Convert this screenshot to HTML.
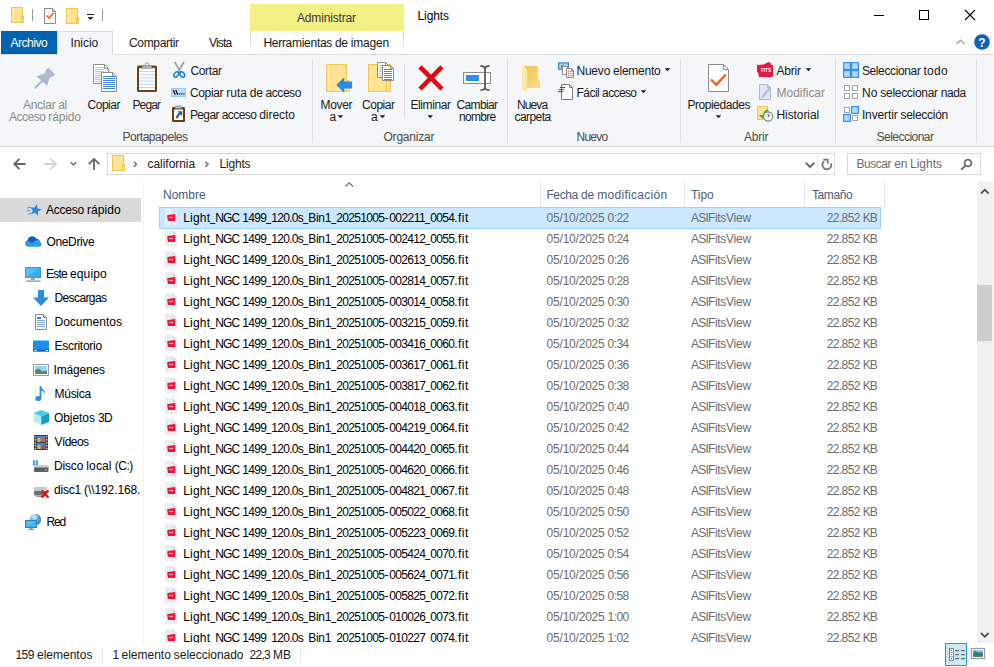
<!DOCTYPE html>
<html lang="es"><head><meta charset="utf-8"><title>Lights</title>
<style>
html,body{margin:0;padding:0;background:#fff;}
body{width:994px;height:667px;position:relative;overflow:hidden;font-family:"Liberation Sans", sans-serif;font-size:12px;}
.b{position:absolute;display:block;}
.t{position:absolute;left:0;white-space:pre;line-height:14px;height:14px;}
.t i{position:absolute;font-style:normal;}
.t .u{transform:scaleX(.76);transform-origin:0 0;top:-.7px;}
</style></head><body>
<div class="b" style="left:250px;top:4px;width:154px;height:27px;background:#f2ef85;"></div>
<div class="b" style="left:250px;top:31px;width:1px;height:20px;background:linear-gradient(#cdcdcd,#e6e6e6 70%,#fff);"></div>
<div class="b" style="left:403px;top:31px;width:1px;height:20px;background:linear-gradient(#cdcdcd,#e6e6e6 70%,#fff);"></div>
<div class="b" style="left:0px;top:54px;width:994px;height:93px;background:#f5f6f7;border-top:1px solid #dadbdc;border-bottom:1px solid #dadbdc;box-sizing:border-box;"></div>
<div class="b" style="left:1px;top:31px;width:56px;height:23px;background:#0063b1;"></div>
<div class="b" style="left:57px;top:31px;width:56px;height:24px;background:#f5f6f7;border:1px solid #dadbdc;border-bottom:none;box-sizing:border-box;"></div>
<div class="b" style="left:312px;top:58px;width:1px;height:85px;background:#e2e3e4;"></div>
<div class="b" style="left:507px;top:58px;width:1px;height:85px;background:#e2e3e4;"></div>
<div class="b" style="left:680px;top:58px;width:1px;height:85px;background:#e2e3e4;"></div>
<div class="b" style="left:835px;top:58px;width:1px;height:85px;background:#e2e3e4;"></div>
<div class="b" style="left:976px;top:58px;width:1px;height:85px;background:#e2e3e4;"></div>
<div class="b" style="left:404px;top:64px;width:1px;height:54px;background:#e2e3e4;"></div>
<div class="b" style="left:107px;top:153px;width:728px;height:22px;background:#fff;border:1px solid #d9d9d9;box-sizing:border-box;"></div>
<div class="b" style="left:817px;top:154px;width:1px;height:20px;background:#e5e5e5;"></div>
<div class="b" style="left:847px;top:153px;width:134px;height:22px;background:#fff;border:1px solid #d9d9d9;box-sizing:border-box;"></div>
<div class="b" style="left:0px;top:198px;width:141px;height:24px;background:#d9d9d9;"></div>
<div class="b" style="left:143px;top:182px;width:1px;height:462px;background:#f3f3f3;"></div>
<div class="b" style="left:540px;top:182px;width:1px;height:25px;background:#e5e5e5;"></div>
<div class="b" style="left:684px;top:182px;width:1px;height:25px;background:#e5e5e5;"></div>
<div class="b" style="left:804px;top:182px;width:1px;height:25px;background:#e5e5e5;"></div>
<div class="b" style="left:884px;top:182px;width:1px;height:25px;background:#e5e5e5;"></div>
<div class="b" style="left:159px;top:207px;width:722px;height:22px;background:#cce8ff;border:1px solid #99d1ff;box-sizing:border-box;"></div>
<div class="b" style="left:977px;top:182px;width:16px;height:461px;background:#f0f0f0;"></div>
<div class="b" style="left:977px;top:285px;width:15px;height:56px;background:#cdcdcd;"></div>
<div class="b" style="left:102px;top:648px;width:1px;height:15px;z-index:6;background:#e5e5e5;"></div>
<div class="b" style="left:300px;top:648px;width:1px;height:15px;z-index:6;background:#e5e5e5;"></div>
<div class="b" style="left:945px;top:643px;width:22px;height:23px;background:#cce8f4;border:1px solid #1e9ade;box-sizing:border-box;"></div>
<svg class="b" style="left:0;top:0" width="994" height="667" viewBox="0 0 994 667"><g transform="translate(165 209)"><path d="M0 0h7.500l4.500 4.500v11.500H0z" fill="#ebecf4"/><path d="M7.500 0l4.500 4.500H7.500z" fill="#d9dbe6"/><path d="M2.900 6.100L9.700 5.100Q10.400 5 10.400 5.700V11.300Q10.400 12.100 9.600 12.100H3.700Q2.900 12.100 2.800 11.400L2.200 6.900Q2.200 6.200 2.900 6.100z" fill="#e6183f"/><rect x="4.200" y="7.900" width="4" height="1.200" fill="#f5a9b8"/></g><g transform="translate(165 230)"><path d="M0 0h7.500l4.500 4.500v11.500H0z" fill="#ebecf4"/><path d="M7.500 0l4.500 4.500H7.500z" fill="#d9dbe6"/><path d="M2.900 6.100L9.700 5.100Q10.400 5 10.400 5.700V11.300Q10.400 12.100 9.600 12.100H3.700Q2.900 12.100 2.800 11.400L2.200 6.900Q2.200 6.200 2.900 6.100z" fill="#e6183f"/><rect x="4.200" y="7.900" width="4" height="1.200" fill="#f5a9b8"/></g><g transform="translate(165 251)"><path d="M0 0h7.500l4.500 4.500v11.500H0z" fill="#ebecf4"/><path d="M7.500 0l4.500 4.500H7.500z" fill="#d9dbe6"/><path d="M2.900 6.100L9.700 5.100Q10.400 5 10.400 5.700V11.300Q10.400 12.100 9.600 12.100H3.700Q2.900 12.100 2.800 11.400L2.200 6.900Q2.200 6.200 2.900 6.100z" fill="#e6183f"/><rect x="4.200" y="7.900" width="4" height="1.200" fill="#f5a9b8"/></g><g transform="translate(165 272)"><path d="M0 0h7.500l4.500 4.500v11.500H0z" fill="#ebecf4"/><path d="M7.500 0l4.500 4.500H7.500z" fill="#d9dbe6"/><path d="M2.900 6.100L9.700 5.100Q10.400 5 10.400 5.700V11.300Q10.400 12.100 9.600 12.100H3.700Q2.900 12.100 2.800 11.400L2.200 6.900Q2.200 6.200 2.900 6.100z" fill="#e6183f"/><rect x="4.200" y="7.900" width="4" height="1.200" fill="#f5a9b8"/></g><g transform="translate(165 293)"><path d="M0 0h7.500l4.500 4.500v11.500H0z" fill="#ebecf4"/><path d="M7.500 0l4.500 4.500H7.500z" fill="#d9dbe6"/><path d="M2.900 6.100L9.700 5.100Q10.400 5 10.400 5.700V11.300Q10.400 12.100 9.600 12.100H3.700Q2.900 12.100 2.800 11.400L2.200 6.900Q2.200 6.200 2.900 6.100z" fill="#e6183f"/><rect x="4.200" y="7.900" width="4" height="1.200" fill="#f5a9b8"/></g><g transform="translate(165 314)"><path d="M0 0h7.500l4.500 4.500v11.500H0z" fill="#ebecf4"/><path d="M7.500 0l4.500 4.500H7.500z" fill="#d9dbe6"/><path d="M2.900 6.100L9.700 5.100Q10.400 5 10.400 5.700V11.300Q10.400 12.100 9.600 12.100H3.700Q2.900 12.100 2.800 11.400L2.200 6.900Q2.200 6.200 2.900 6.100z" fill="#e6183f"/><rect x="4.200" y="7.900" width="4" height="1.200" fill="#f5a9b8"/></g><g transform="translate(165 335)"><path d="M0 0h7.500l4.500 4.500v11.500H0z" fill="#ebecf4"/><path d="M7.500 0l4.500 4.500H7.500z" fill="#d9dbe6"/><path d="M2.900 6.100L9.700 5.100Q10.400 5 10.400 5.700V11.300Q10.400 12.100 9.600 12.100H3.700Q2.900 12.100 2.800 11.400L2.200 6.900Q2.200 6.200 2.900 6.100z" fill="#e6183f"/><rect x="4.200" y="7.900" width="4" height="1.200" fill="#f5a9b8"/></g><g transform="translate(165 356)"><path d="M0 0h7.500l4.500 4.500v11.500H0z" fill="#ebecf4"/><path d="M7.500 0l4.500 4.500H7.500z" fill="#d9dbe6"/><path d="M2.900 6.100L9.700 5.100Q10.400 5 10.400 5.700V11.300Q10.400 12.100 9.600 12.100H3.700Q2.900 12.100 2.800 11.400L2.200 6.900Q2.200 6.200 2.900 6.100z" fill="#e6183f"/><rect x="4.200" y="7.900" width="4" height="1.200" fill="#f5a9b8"/></g><g transform="translate(165 377)"><path d="M0 0h7.500l4.500 4.500v11.500H0z" fill="#ebecf4"/><path d="M7.500 0l4.500 4.500H7.500z" fill="#d9dbe6"/><path d="M2.900 6.100L9.700 5.100Q10.400 5 10.400 5.700V11.300Q10.400 12.100 9.600 12.100H3.700Q2.900 12.100 2.800 11.400L2.200 6.900Q2.200 6.200 2.900 6.100z" fill="#e6183f"/><rect x="4.200" y="7.900" width="4" height="1.200" fill="#f5a9b8"/></g><g transform="translate(165 398)"><path d="M0 0h7.500l4.500 4.500v11.500H0z" fill="#ebecf4"/><path d="M7.500 0l4.500 4.500H7.500z" fill="#d9dbe6"/><path d="M2.900 6.100L9.700 5.100Q10.400 5 10.400 5.700V11.300Q10.400 12.100 9.600 12.100H3.700Q2.900 12.100 2.800 11.400L2.200 6.900Q2.200 6.200 2.900 6.100z" fill="#e6183f"/><rect x="4.200" y="7.900" width="4" height="1.200" fill="#f5a9b8"/></g><g transform="translate(165 419)"><path d="M0 0h7.500l4.500 4.500v11.500H0z" fill="#ebecf4"/><path d="M7.500 0l4.500 4.500H7.500z" fill="#d9dbe6"/><path d="M2.900 6.100L9.700 5.100Q10.400 5 10.400 5.700V11.300Q10.400 12.100 9.600 12.100H3.700Q2.900 12.100 2.800 11.400L2.200 6.900Q2.200 6.200 2.900 6.100z" fill="#e6183f"/><rect x="4.200" y="7.900" width="4" height="1.200" fill="#f5a9b8"/></g><g transform="translate(165 440)"><path d="M0 0h7.500l4.500 4.500v11.500H0z" fill="#ebecf4"/><path d="M7.500 0l4.500 4.500H7.500z" fill="#d9dbe6"/><path d="M2.900 6.100L9.700 5.100Q10.400 5 10.400 5.700V11.300Q10.400 12.100 9.600 12.100H3.700Q2.900 12.100 2.800 11.400L2.200 6.900Q2.200 6.200 2.900 6.100z" fill="#e6183f"/><rect x="4.200" y="7.900" width="4" height="1.200" fill="#f5a9b8"/></g><g transform="translate(165 461)"><path d="M0 0h7.500l4.500 4.500v11.500H0z" fill="#ebecf4"/><path d="M7.500 0l4.500 4.500H7.500z" fill="#d9dbe6"/><path d="M2.900 6.100L9.700 5.100Q10.400 5 10.400 5.700V11.300Q10.400 12.100 9.600 12.100H3.700Q2.900 12.100 2.800 11.400L2.200 6.900Q2.200 6.200 2.900 6.100z" fill="#e6183f"/><rect x="4.200" y="7.900" width="4" height="1.200" fill="#f5a9b8"/></g><g transform="translate(165 482)"><path d="M0 0h7.500l4.500 4.500v11.500H0z" fill="#ebecf4"/><path d="M7.500 0l4.500 4.500H7.500z" fill="#d9dbe6"/><path d="M2.900 6.100L9.700 5.100Q10.400 5 10.400 5.700V11.300Q10.400 12.100 9.600 12.100H3.700Q2.900 12.100 2.800 11.400L2.200 6.900Q2.200 6.200 2.900 6.100z" fill="#e6183f"/><rect x="4.200" y="7.900" width="4" height="1.200" fill="#f5a9b8"/></g><g transform="translate(165 503)"><path d="M0 0h7.500l4.500 4.500v11.500H0z" fill="#ebecf4"/><path d="M7.500 0l4.500 4.500H7.500z" fill="#d9dbe6"/><path d="M2.900 6.100L9.700 5.100Q10.400 5 10.400 5.700V11.300Q10.400 12.100 9.600 12.100H3.700Q2.900 12.100 2.800 11.400L2.200 6.900Q2.200 6.200 2.900 6.100z" fill="#e6183f"/><rect x="4.200" y="7.900" width="4" height="1.200" fill="#f5a9b8"/></g><g transform="translate(165 524)"><path d="M0 0h7.500l4.500 4.500v11.500H0z" fill="#ebecf4"/><path d="M7.500 0l4.500 4.500H7.500z" fill="#d9dbe6"/><path d="M2.900 6.100L9.700 5.100Q10.400 5 10.400 5.700V11.300Q10.400 12.100 9.600 12.100H3.700Q2.900 12.100 2.800 11.400L2.200 6.900Q2.200 6.200 2.900 6.100z" fill="#e6183f"/><rect x="4.200" y="7.900" width="4" height="1.200" fill="#f5a9b8"/></g><g transform="translate(165 545)"><path d="M0 0h7.500l4.500 4.500v11.500H0z" fill="#ebecf4"/><path d="M7.500 0l4.500 4.500H7.500z" fill="#d9dbe6"/><path d="M2.900 6.100L9.700 5.100Q10.400 5 10.400 5.700V11.300Q10.400 12.100 9.600 12.100H3.700Q2.900 12.100 2.800 11.400L2.200 6.900Q2.200 6.200 2.900 6.100z" fill="#e6183f"/><rect x="4.200" y="7.900" width="4" height="1.200" fill="#f5a9b8"/></g><g transform="translate(165 566)"><path d="M0 0h7.500l4.500 4.500v11.500H0z" fill="#ebecf4"/><path d="M7.500 0l4.500 4.500H7.500z" fill="#d9dbe6"/><path d="M2.900 6.100L9.700 5.100Q10.400 5 10.400 5.700V11.300Q10.400 12.100 9.600 12.100H3.700Q2.900 12.100 2.800 11.400L2.200 6.900Q2.200 6.200 2.900 6.100z" fill="#e6183f"/><rect x="4.200" y="7.900" width="4" height="1.200" fill="#f5a9b8"/></g><g transform="translate(165 587)"><path d="M0 0h7.500l4.500 4.500v11.500H0z" fill="#ebecf4"/><path d="M7.500 0l4.500 4.500H7.500z" fill="#d9dbe6"/><path d="M2.900 6.100L9.700 5.100Q10.400 5 10.400 5.700V11.300Q10.400 12.100 9.600 12.100H3.700Q2.900 12.100 2.800 11.400L2.200 6.900Q2.200 6.200 2.900 6.100z" fill="#e6183f"/><rect x="4.200" y="7.900" width="4" height="1.200" fill="#f5a9b8"/></g><g transform="translate(165 608)"><path d="M0 0h7.500l4.500 4.500v11.500H0z" fill="#ebecf4"/><path d="M7.500 0l4.500 4.500H7.500z" fill="#d9dbe6"/><path d="M2.900 6.100L9.700 5.100Q10.400 5 10.400 5.700V11.300Q10.400 12.100 9.600 12.100H3.700Q2.900 12.100 2.800 11.400L2.200 6.900Q2.200 6.200 2.900 6.100z" fill="#e6183f"/><rect x="4.200" y="7.900" width="4" height="1.200" fill="#f5a9b8"/></g><g transform="translate(165 629)"><path d="M0 0h7.500l4.500 4.500v11.500H0z" fill="#ebecf4"/><path d="M7.500 0l4.500 4.500H7.500z" fill="#d9dbe6"/><path d="M2.900 6.100L9.700 5.100Q10.400 5 10.400 5.700V11.300Q10.400 12.100 9.600 12.100H3.700Q2.900 12.100 2.800 11.400L2.200 6.900Q2.200 6.200 2.900 6.100z" fill="#e6183f"/><rect x="4.200" y="7.900" width="4" height="1.200" fill="#f5a9b8"/></g></svg>
<span class="t" style="top:11px;color:#3a3a3a;"><i style="left:297px;letter-spacing:-0.17px;">Administrar</i></span>
<span class="t" style="top:9px;"><i style="left:417.5px;letter-spacing:-0.1px;">Lights</i></span>
<span class="t" style="top:36px;color:#fff;"><i style="left:10.5px;letter-spacing:-0.47px;">Archivo</i></span>
<span class="t" style="top:36px;color:#1a1a1a;"><i style="left:70.5px;letter-spacing:-0.07px;">Inicio</i></span>
<span class="t" style="top:36px;color:#1a1a1a;"><i style="left:129px;letter-spacing:-0.33px;">Compartir</i></span>
<span class="t" style="top:36px;color:#1a1a1a;"><i style="left:209px;letter-spacing:-0.82px;">Vista</i></span>
<span class="t" style="top:36px;color:#1a1a1a;"><i style="left:263.4px;letter-spacing:-0.28px;">Herramientas </i><i style="left:334.97px;letter-spacing:-0.3px;">de </i><i style="left:350.66px;letter-spacing:-0.19px;">imagen</i></span>
<span class="t" style="top:97.5px;color:#8b8b8b;"><i style="left:22.9px;letter-spacing:-0.25px;">Anclar </i><i style="left:58.29px;letter-spacing:-0.37px;">al</i></span>
<span class="t" style="top:109.5px;color:#8b8b8b;"><i style="left:8.9px;letter-spacing:-0.48px;">Acceso </i><i style="left:48.26px;letter-spacing:-0.12px;">rápido</i></span>
<span class="t" style="top:97.5px;color:#1a1a1a;"><i style="left:87.5px;letter-spacing:-0.47px;">Copiar</i></span>
<span class="t" style="top:97.5px;color:#1a1a1a;"><i style="left:132.5px;letter-spacing:-0.88px;">Pegar</i></span>
<span class="t" style="top:63.5px;color:#1a1a1a;"><i style="left:190.5px;letter-spacing:-0.37px;">Cortar</i></span>
<span class="t" style="top:85.5px;color:#1a1a1a;"><i style="left:189.9px;letter-spacing:-0.33px;">Copiar </i><i style="left:226.25px;letter-spacing:-0.01px;">ruta </i><i style="left:249.82px;letter-spacing:-0.29px;">de </i><i style="left:265.54px;letter-spacing:-0.44px;">acceso</i></span>
<span class="t" style="top:107.5px;color:#1a1a1a;"><i style="left:189.9px;letter-spacing:-0.62px;">Pegar </i><i style="left:221.69px;letter-spacing:-0.56px;">acceso </i><i style="left:259.26px;letter-spacing:-0.05px;">directo</i></span>
<span class="t" style="top:130px;color:#4a4a4a;"><i style="left:122.5px;letter-spacing:-0.47px;">Portapapeles</i></span>
<span class="t" style="top:97.5px;color:#1a1a1a;"><i style="left:320.5px;letter-spacing:-0.34px;">Mover</i></span>
<span class="t" style="top:109.5px;color:#1a1a1a;"><i style="left:329.5px;">a</i></span>
<span class="t" style="top:97.5px;color:#1a1a1a;"><i style="left:362px;letter-spacing:-0.47px;">Copiar</i></span>
<span class="t" style="top:109.5px;color:#1a1a1a;"><i style="left:371px;">a</i></span>
<span class="t" style="top:97.5px;color:#1a1a1a;"><i style="left:410.5px;letter-spacing:-0.41px;">Eliminar</i></span>
<span class="t" style="top:97.5px;color:#1a1a1a;"><i style="left:456.5px;letter-spacing:-0.64px;">Cambiar</i></span>
<span class="t" style="top:109.5px;color:#1a1a1a;"><i style="left:459px;letter-spacing:-0.7px;">nombre</i></span>
<span class="t" style="top:130px;color:#4a4a4a;"><i style="left:383.5px;letter-spacing:-0.21px;">Organizar</i></span>
<span class="t" style="top:97.5px;color:#1a1a1a;"><i style="left:517px;letter-spacing:-0.88px;">Nueva</i></span>
<span class="t" style="top:109.5px;color:#1a1a1a;"><i style="left:514.5px;letter-spacing:-0.56px;">carpeta</i></span>
<span class="t" style="top:63.5px;color:#1a1a1a;"><i style="left:576.4px;letter-spacing:-0.18px;">Nuevo </i><i style="left:613.09px;letter-spacing:-0.26px;">elemento</i></span>
<span class="t" style="top:85.5px;color:#1a1a1a;"><i style="left:576.4px;letter-spacing:-0.5px;">Fácil </i><i style="left:602.11px;letter-spacing:-0.62px;">acceso</i></span>
<span class="t" style="top:130px;color:#4a4a4a;"><i style="left:576.5px;letter-spacing:-0.75px;">Nuevo</i></span>
<span class="t" style="top:97.5px;color:#1a1a1a;"><i style="left:687.5px;letter-spacing:-0.44px;">Propiedades</i></span>
<span class="t" style="top:63.5px;color:#1a1a1a;"><i style="left:776.5px;letter-spacing:-0.21px;">Abrir</i></span>
<span class="t" style="top:85.5px;color:#8b8b8b;"><i style="left:776.5px;letter-spacing:-0.02px;">Modificar</i></span>
<span class="t" style="top:107.5px;color:#1a1a1a;"><i style="left:776.5px;letter-spacing:-0.08px;">Historial</i></span>
<span class="t" style="top:130px;color:#4a4a4a;"><i style="left:744px;letter-spacing:-0.21px;">Abrir</i></span>
<span class="t" style="top:63.5px;color:#1a1a1a;"><i style="left:861.9px;letter-spacing:-0.37px;">Seleccionar </i><i style="left:923.47px;letter-spacing:0.27px;">todo</i></span>
<span class="t" style="top:85.5px;color:#1a1a1a;"><i style="left:861.9px;letter-spacing:0.11px;">No </i><i style="left:880.37px;letter-spacing:-0.3px;">seleccionar </i><i style="left:940.63px;letter-spacing:-0.36px;">nada</i></span>
<span class="t" style="top:107.5px;color:#1a1a1a;"><i style="left:861.9px;letter-spacing:-0.12px;">Invertir </i><i style="left:900.55px;letter-spacing:-0.3px;">selección</i></span>
<span class="t" style="top:130px;color:#4a4a4a;"><i style="left:876.5px;letter-spacing:-0.52px;">Seleccionar</i></span>
<span class="t" style="top:157px;color:#1a1a1a;"><i style="left:147.5px;letter-spacing:-0.04px;">california</i></span>
<span class="t" style="top:157px;color:#1a1a1a;"><i style="left:219.5px;letter-spacing:-0.2px;">Lights</i></span>
<span class="t" style="top:157px;color:#6d6d6d;"><i style="left:856.4px;letter-spacing:-0.43px;">Buscar </i><i style="left:894.18px;letter-spacing:-0.21px;">en </i><i style="left:910.09px;letter-spacing:-0.03px;">Lights</i></span>
<span class="t" style="top:188px;color:#4c607a;"><i style="left:163px;">Nombre</i></span>
<span class="t" style="top:188px;color:#4c607a;"><i style="left:546.4px;letter-spacing:-0.37px;">Fecha </i><i style="left:580.97px;letter-spacing:-0.06px;">de </i><i style="left:597.24px;letter-spacing:0.29px;">modificación</i></span>
<span class="t" style="top:188px;color:#4c607a;"><i style="left:691px;letter-spacing:-0.07px;">Tipo</i></span>
<span class="t" style="top:188px;color:#4c607a;"><i style="left:812px;letter-spacing:-0.4px;">Tamaño</i></span>
<span class="t" style="top:203px;"><i style="left:45.9px;letter-spacing:-0.23px;">Acceso </i><i style="left:86.9px;letter-spacing:0.11px;">rápido</i></span>
<span class="t" style="top:235px;"><i style="left:46.5px;letter-spacing:-0.36px;">OneDrive</i></span>
<span class="t" style="top:267px;"><i style="left:45.9px;letter-spacing:-0.75px;">Este </i><i style="left:69.9px;letter-spacing:0.16px;">equipo</i></span>
<span class="t" style="top:291px;"><i style="left:54.5px;letter-spacing:-0.61px;">Descargas</i></span>
<span class="t" style="top:315px;"><i style="left:54.5px;letter-spacing:0.01px;">Documentos</i></span>
<span class="t" style="top:339px;"><i style="left:54.5px;letter-spacing:-0.26px;">Escritorio</i></span>
<span class="t" style="top:363px;"><i style="left:53.5px;letter-spacing:-0.17px;">Imágenes</i></span>
<span class="t" style="top:387px;"><i style="left:54.5px;letter-spacing:-0.27px;">Música</i></span>
<span class="t" style="top:411px;"><i style="left:53.9px;letter-spacing:-0.05px;">Objetos </i><i style="left:97.9px;letter-spacing:-0.67px;">3D</i></span>
<span class="t" style="top:435px;"><i style="left:54.5px;letter-spacing:-0.57px;">Vídeos</i></span>
<span class="t" style="top:459px;"><i style="left:53.9px;letter-spacing:-0.13px;">Disco </i><i style="left:86.31px;letter-spacing:0.13px;">local </i><i style="left:114.67px;letter-spacing:-0.44px;">(C:)</i></span>
<span class="t" style="top:483px;"><i style="left:53.9px;letter-spacing:-0.17px;">disc1 </i><i style="left:84.07px;letter-spacing:-0.1px;">(\\192.168.</i></span>
<span class="t" style="top:515px;"><i style="left:46.5px;letter-spacing:-1.17px;">Red</i></span>
<span class="t" style="top:210.5px;"><i style="left:183.2px;letter-spacing:0.2px;">Light</i><i class="u" style="left:210.2px">_</i><i style="left:215.2px;letter-spacing:-0.89px;">NGC </i><i style="left:242.2px;letter-spacing:-0.67px;">1499</i><i class="u" style="left:266.2px">_</i><i style="left:271.2px;letter-spacing:-0.67px;">120.0s</i><i class="u" style="left:303.2px">_</i><i style="left:308.2px;letter-spacing:-0.25px;">Bin1</i><i class="u" style="left:331.2px">_</i><i style="left:336.2px;letter-spacing:-0.67px;">20251005</i><i style="left:384.6px;">-</i><i style="left:389.2px;letter-spacing:-0.53px;">002211</i><i class="u" style="left:425.2px">_</i><i style="left:430.2px;letter-spacing:-0.67px;">0054</i><i style="left:454.2px;letter-spacing:0.48px;">.fit</i></span>
<span class="t" style="top:210.5px;color:#6d6d6d;"><i style="left:546.6px;letter-spacing:-0.21px;">05/10/2025 </i><i style="left:607.6px;letter-spacing:-0.59px;">0:22</i></span>
<span class="t" style="top:210.5px;color:#6d6d6d;"><i style="left:691px;letter-spacing:-0.78px;">ASI</i><i style="left:708px;letter-spacing:-0.33px;">Fits</i><i style="left:726px;letter-spacing:-0.2px;">View</i></span>
<span class="t" style="top:210.5px;color:#6d6d6d;"><i style="left:826.8px;letter-spacing:-0.62px;">22.852 </i><i style="left:862.8px;letter-spacing:-1px;">KB</i></span>
<span class="t" style="top:231.5px;"><i style="left:183.2px;letter-spacing:0.2px;">Light</i><i class="u" style="left:210.2px">_</i><i style="left:215.2px;letter-spacing:-0.89px;">NGC </i><i style="left:242.2px;letter-spacing:-0.67px;">1499</i><i class="u" style="left:266.2px">_</i><i style="left:271.2px;letter-spacing:-0.67px;">120.0s</i><i class="u" style="left:303.2px">_</i><i style="left:308.2px;letter-spacing:-0.25px;">Bin1</i><i class="u" style="left:331.2px">_</i><i style="left:336.2px;letter-spacing:-0.67px;">20251005</i><i style="left:384.6px;">-</i><i style="left:389.2px;letter-spacing:-0.67px;">002412</i><i class="u" style="left:425.2px">_</i><i style="left:430.2px;letter-spacing:-0.67px;">0055</i><i style="left:454.2px;letter-spacing:0.48px;">.fit</i></span>
<span class="t" style="top:231.5px;color:#6d6d6d;"><i style="left:546.6px;letter-spacing:-0.21px;">05/10/2025 </i><i style="left:607.6px;letter-spacing:-0.59px;">0:24</i></span>
<span class="t" style="top:231.5px;color:#6d6d6d;"><i style="left:691px;letter-spacing:-0.78px;">ASI</i><i style="left:708px;letter-spacing:-0.33px;">Fits</i><i style="left:726px;letter-spacing:-0.2px;">View</i></span>
<span class="t" style="top:231.5px;color:#6d6d6d;"><i style="left:826.8px;letter-spacing:-0.62px;">22.852 </i><i style="left:862.8px;letter-spacing:-1px;">KB</i></span>
<span class="t" style="top:252.5px;"><i style="left:183.2px;letter-spacing:0.2px;">Light</i><i class="u" style="left:210.2px">_</i><i style="left:215.2px;letter-spacing:-0.89px;">NGC </i><i style="left:242.2px;letter-spacing:-0.67px;">1499</i><i class="u" style="left:266.2px">_</i><i style="left:271.2px;letter-spacing:-0.67px;">120.0s</i><i class="u" style="left:303.2px">_</i><i style="left:308.2px;letter-spacing:-0.25px;">Bin1</i><i class="u" style="left:331.2px">_</i><i style="left:336.2px;letter-spacing:-0.67px;">20251005</i><i style="left:384.6px;">-</i><i style="left:389.2px;letter-spacing:-0.67px;">002613</i><i class="u" style="left:425.2px">_</i><i style="left:430.2px;letter-spacing:-0.67px;">0056</i><i style="left:454.2px;letter-spacing:0.48px;">.fit</i></span>
<span class="t" style="top:252.5px;color:#6d6d6d;"><i style="left:546.6px;letter-spacing:-0.21px;">05/10/2025 </i><i style="left:607.6px;letter-spacing:-0.59px;">0:26</i></span>
<span class="t" style="top:252.5px;color:#6d6d6d;"><i style="left:691px;letter-spacing:-0.78px;">ASI</i><i style="left:708px;letter-spacing:-0.33px;">Fits</i><i style="left:726px;letter-spacing:-0.2px;">View</i></span>
<span class="t" style="top:252.5px;color:#6d6d6d;"><i style="left:826.8px;letter-spacing:-0.62px;">22.852 </i><i style="left:862.8px;letter-spacing:-1px;">KB</i></span>
<span class="t" style="top:273.5px;"><i style="left:183.2px;letter-spacing:0.2px;">Light</i><i class="u" style="left:210.2px">_</i><i style="left:215.2px;letter-spacing:-0.89px;">NGC </i><i style="left:242.2px;letter-spacing:-0.67px;">1499</i><i class="u" style="left:266.2px">_</i><i style="left:271.2px;letter-spacing:-0.67px;">120.0s</i><i class="u" style="left:303.2px">_</i><i style="left:308.2px;letter-spacing:-0.25px;">Bin1</i><i class="u" style="left:331.2px">_</i><i style="left:336.2px;letter-spacing:-0.67px;">20251005</i><i style="left:384.6px;">-</i><i style="left:389.2px;letter-spacing:-0.67px;">002814</i><i class="u" style="left:425.2px">_</i><i style="left:430.2px;letter-spacing:-0.67px;">0057</i><i style="left:454.2px;letter-spacing:0.48px;">.fit</i></span>
<span class="t" style="top:273.5px;color:#6d6d6d;"><i style="left:546.6px;letter-spacing:-0.21px;">05/10/2025 </i><i style="left:607.6px;letter-spacing:-0.59px;">0:28</i></span>
<span class="t" style="top:273.5px;color:#6d6d6d;"><i style="left:691px;letter-spacing:-0.78px;">ASI</i><i style="left:708px;letter-spacing:-0.33px;">Fits</i><i style="left:726px;letter-spacing:-0.2px;">View</i></span>
<span class="t" style="top:273.5px;color:#6d6d6d;"><i style="left:826.8px;letter-spacing:-0.62px;">22.852 </i><i style="left:862.8px;letter-spacing:-1px;">KB</i></span>
<span class="t" style="top:294.5px;"><i style="left:183.2px;letter-spacing:0.2px;">Light</i><i class="u" style="left:210.2px">_</i><i style="left:215.2px;letter-spacing:-0.89px;">NGC </i><i style="left:242.2px;letter-spacing:-0.67px;">1499</i><i class="u" style="left:266.2px">_</i><i style="left:271.2px;letter-spacing:-0.67px;">120.0s</i><i class="u" style="left:303.2px">_</i><i style="left:308.2px;letter-spacing:-0.25px;">Bin1</i><i class="u" style="left:331.2px">_</i><i style="left:336.2px;letter-spacing:-0.67px;">20251005</i><i style="left:384.6px;">-</i><i style="left:389.2px;letter-spacing:-0.67px;">003014</i><i class="u" style="left:425.2px">_</i><i style="left:430.2px;letter-spacing:-0.67px;">0058</i><i style="left:454.2px;letter-spacing:0.48px;">.fit</i></span>
<span class="t" style="top:294.5px;color:#6d6d6d;"><i style="left:546.6px;letter-spacing:-0.21px;">05/10/2025 </i><i style="left:607.6px;letter-spacing:-0.59px;">0:30</i></span>
<span class="t" style="top:294.5px;color:#6d6d6d;"><i style="left:691px;letter-spacing:-0.78px;">ASI</i><i style="left:708px;letter-spacing:-0.33px;">Fits</i><i style="left:726px;letter-spacing:-0.2px;">View</i></span>
<span class="t" style="top:294.5px;color:#6d6d6d;"><i style="left:826.8px;letter-spacing:-0.62px;">22.852 </i><i style="left:862.8px;letter-spacing:-1px;">KB</i></span>
<span class="t" style="top:315.5px;"><i style="left:183.2px;letter-spacing:0.2px;">Light</i><i class="u" style="left:210.2px">_</i><i style="left:215.2px;letter-spacing:-0.89px;">NGC </i><i style="left:242.2px;letter-spacing:-0.67px;">1499</i><i class="u" style="left:266.2px">_</i><i style="left:271.2px;letter-spacing:-0.67px;">120.0s</i><i class="u" style="left:303.2px">_</i><i style="left:308.2px;letter-spacing:-0.25px;">Bin1</i><i class="u" style="left:331.2px">_</i><i style="left:336.2px;letter-spacing:-0.67px;">20251005</i><i style="left:384.6px;">-</i><i style="left:389.2px;letter-spacing:-0.67px;">003215</i><i class="u" style="left:425.2px">_</i><i style="left:430.2px;letter-spacing:-0.67px;">0059</i><i style="left:454.2px;letter-spacing:0.48px;">.fit</i></span>
<span class="t" style="top:315.5px;color:#6d6d6d;"><i style="left:546.6px;letter-spacing:-0.21px;">05/10/2025 </i><i style="left:607.6px;letter-spacing:-0.59px;">0:32</i></span>
<span class="t" style="top:315.5px;color:#6d6d6d;"><i style="left:691px;letter-spacing:-0.78px;">ASI</i><i style="left:708px;letter-spacing:-0.33px;">Fits</i><i style="left:726px;letter-spacing:-0.2px;">View</i></span>
<span class="t" style="top:315.5px;color:#6d6d6d;"><i style="left:826.8px;letter-spacing:-0.62px;">22.852 </i><i style="left:862.8px;letter-spacing:-1px;">KB</i></span>
<span class="t" style="top:336.5px;"><i style="left:183.2px;letter-spacing:0.2px;">Light</i><i class="u" style="left:210.2px">_</i><i style="left:215.2px;letter-spacing:-0.89px;">NGC </i><i style="left:242.2px;letter-spacing:-0.67px;">1499</i><i class="u" style="left:266.2px">_</i><i style="left:271.2px;letter-spacing:-0.67px;">120.0s</i><i class="u" style="left:303.2px">_</i><i style="left:308.2px;letter-spacing:-0.25px;">Bin1</i><i class="u" style="left:331.2px">_</i><i style="left:336.2px;letter-spacing:-0.67px;">20251005</i><i style="left:384.6px;">-</i><i style="left:389.2px;letter-spacing:-0.67px;">003416</i><i class="u" style="left:425.2px">_</i><i style="left:430.2px;letter-spacing:-0.67px;">0060</i><i style="left:454.2px;letter-spacing:0.48px;">.fit</i></span>
<span class="t" style="top:336.5px;color:#6d6d6d;"><i style="left:546.6px;letter-spacing:-0.21px;">05/10/2025 </i><i style="left:607.6px;letter-spacing:-0.59px;">0:34</i></span>
<span class="t" style="top:336.5px;color:#6d6d6d;"><i style="left:691px;letter-spacing:-0.78px;">ASI</i><i style="left:708px;letter-spacing:-0.33px;">Fits</i><i style="left:726px;letter-spacing:-0.2px;">View</i></span>
<span class="t" style="top:336.5px;color:#6d6d6d;"><i style="left:826.8px;letter-spacing:-0.62px;">22.852 </i><i style="left:862.8px;letter-spacing:-1px;">KB</i></span>
<span class="t" style="top:357.5px;"><i style="left:183.2px;letter-spacing:0.2px;">Light</i><i class="u" style="left:210.2px">_</i><i style="left:215.2px;letter-spacing:-0.89px;">NGC </i><i style="left:242.2px;letter-spacing:-0.67px;">1499</i><i class="u" style="left:266.2px">_</i><i style="left:271.2px;letter-spacing:-0.67px;">120.0s</i><i class="u" style="left:303.2px">_</i><i style="left:308.2px;letter-spacing:-0.25px;">Bin1</i><i class="u" style="left:331.2px">_</i><i style="left:336.2px;letter-spacing:-0.67px;">20251005</i><i style="left:384.6px;">-</i><i style="left:389.2px;letter-spacing:-0.67px;">003617</i><i class="u" style="left:425.2px">_</i><i style="left:430.2px;letter-spacing:-0.67px;">0061</i><i style="left:454.2px;letter-spacing:0.48px;">.fit</i></span>
<span class="t" style="top:357.5px;color:#6d6d6d;"><i style="left:546.6px;letter-spacing:-0.21px;">05/10/2025 </i><i style="left:607.6px;letter-spacing:-0.59px;">0:36</i></span>
<span class="t" style="top:357.5px;color:#6d6d6d;"><i style="left:691px;letter-spacing:-0.78px;">ASI</i><i style="left:708px;letter-spacing:-0.33px;">Fits</i><i style="left:726px;letter-spacing:-0.2px;">View</i></span>
<span class="t" style="top:357.5px;color:#6d6d6d;"><i style="left:826.8px;letter-spacing:-0.62px;">22.852 </i><i style="left:862.8px;letter-spacing:-1px;">KB</i></span>
<span class="t" style="top:378.5px;"><i style="left:183.2px;letter-spacing:0.2px;">Light</i><i class="u" style="left:210.2px">_</i><i style="left:215.2px;letter-spacing:-0.89px;">NGC </i><i style="left:242.2px;letter-spacing:-0.67px;">1499</i><i class="u" style="left:266.2px">_</i><i style="left:271.2px;letter-spacing:-0.67px;">120.0s</i><i class="u" style="left:303.2px">_</i><i style="left:308.2px;letter-spacing:-0.25px;">Bin1</i><i class="u" style="left:331.2px">_</i><i style="left:336.2px;letter-spacing:-0.67px;">20251005</i><i style="left:384.6px;">-</i><i style="left:389.2px;letter-spacing:-0.67px;">003817</i><i class="u" style="left:425.2px">_</i><i style="left:430.2px;letter-spacing:-0.67px;">0062</i><i style="left:454.2px;letter-spacing:0.48px;">.fit</i></span>
<span class="t" style="top:378.5px;color:#6d6d6d;"><i style="left:546.6px;letter-spacing:-0.21px;">05/10/2025 </i><i style="left:607.6px;letter-spacing:-0.59px;">0:38</i></span>
<span class="t" style="top:378.5px;color:#6d6d6d;"><i style="left:691px;letter-spacing:-0.78px;">ASI</i><i style="left:708px;letter-spacing:-0.33px;">Fits</i><i style="left:726px;letter-spacing:-0.2px;">View</i></span>
<span class="t" style="top:378.5px;color:#6d6d6d;"><i style="left:826.8px;letter-spacing:-0.62px;">22.852 </i><i style="left:862.8px;letter-spacing:-1px;">KB</i></span>
<span class="t" style="top:399.5px;"><i style="left:183.2px;letter-spacing:0.2px;">Light</i><i class="u" style="left:210.2px">_</i><i style="left:215.2px;letter-spacing:-0.89px;">NGC </i><i style="left:242.2px;letter-spacing:-0.67px;">1499</i><i class="u" style="left:266.2px">_</i><i style="left:271.2px;letter-spacing:-0.67px;">120.0s</i><i class="u" style="left:303.2px">_</i><i style="left:308.2px;letter-spacing:-0.25px;">Bin1</i><i class="u" style="left:331.2px">_</i><i style="left:336.2px;letter-spacing:-0.67px;">20251005</i><i style="left:384.6px;">-</i><i style="left:389.2px;letter-spacing:-0.67px;">004018</i><i class="u" style="left:425.2px">_</i><i style="left:430.2px;letter-spacing:-0.67px;">0063</i><i style="left:454.2px;letter-spacing:0.48px;">.fit</i></span>
<span class="t" style="top:399.5px;color:#6d6d6d;"><i style="left:546.6px;letter-spacing:-0.21px;">05/10/2025 </i><i style="left:607.6px;letter-spacing:-0.59px;">0:40</i></span>
<span class="t" style="top:399.5px;color:#6d6d6d;"><i style="left:691px;letter-spacing:-0.78px;">ASI</i><i style="left:708px;letter-spacing:-0.33px;">Fits</i><i style="left:726px;letter-spacing:-0.2px;">View</i></span>
<span class="t" style="top:399.5px;color:#6d6d6d;"><i style="left:826.8px;letter-spacing:-0.62px;">22.852 </i><i style="left:862.8px;letter-spacing:-1px;">KB</i></span>
<span class="t" style="top:420.5px;"><i style="left:183.2px;letter-spacing:0.2px;">Light</i><i class="u" style="left:210.2px">_</i><i style="left:215.2px;letter-spacing:-0.89px;">NGC </i><i style="left:242.2px;letter-spacing:-0.67px;">1499</i><i class="u" style="left:266.2px">_</i><i style="left:271.2px;letter-spacing:-0.67px;">120.0s</i><i class="u" style="left:303.2px">_</i><i style="left:308.2px;letter-spacing:-0.25px;">Bin1</i><i class="u" style="left:331.2px">_</i><i style="left:336.2px;letter-spacing:-0.67px;">20251005</i><i style="left:384.6px;">-</i><i style="left:389.2px;letter-spacing:-0.67px;">004219</i><i class="u" style="left:425.2px">_</i><i style="left:430.2px;letter-spacing:-0.67px;">0064</i><i style="left:454.2px;letter-spacing:0.48px;">.fit</i></span>
<span class="t" style="top:420.5px;color:#6d6d6d;"><i style="left:546.6px;letter-spacing:-0.21px;">05/10/2025 </i><i style="left:607.6px;letter-spacing:-0.59px;">0:42</i></span>
<span class="t" style="top:420.5px;color:#6d6d6d;"><i style="left:691px;letter-spacing:-0.78px;">ASI</i><i style="left:708px;letter-spacing:-0.33px;">Fits</i><i style="left:726px;letter-spacing:-0.2px;">View</i></span>
<span class="t" style="top:420.5px;color:#6d6d6d;"><i style="left:826.8px;letter-spacing:-0.62px;">22.852 </i><i style="left:862.8px;letter-spacing:-1px;">KB</i></span>
<span class="t" style="top:441.5px;"><i style="left:183.2px;letter-spacing:0.2px;">Light</i><i class="u" style="left:210.2px">_</i><i style="left:215.2px;letter-spacing:-0.89px;">NGC </i><i style="left:242.2px;letter-spacing:-0.67px;">1499</i><i class="u" style="left:266.2px">_</i><i style="left:271.2px;letter-spacing:-0.67px;">120.0s</i><i class="u" style="left:303.2px">_</i><i style="left:308.2px;letter-spacing:-0.25px;">Bin1</i><i class="u" style="left:331.2px">_</i><i style="left:336.2px;letter-spacing:-0.67px;">20251005</i><i style="left:384.6px;">-</i><i style="left:389.2px;letter-spacing:-0.67px;">004420</i><i class="u" style="left:425.2px">_</i><i style="left:430.2px;letter-spacing:-0.67px;">0065</i><i style="left:454.2px;letter-spacing:0.48px;">.fit</i></span>
<span class="t" style="top:441.5px;color:#6d6d6d;"><i style="left:546.6px;letter-spacing:-0.21px;">05/10/2025 </i><i style="left:607.6px;letter-spacing:-0.59px;">0:44</i></span>
<span class="t" style="top:441.5px;color:#6d6d6d;"><i style="left:691px;letter-spacing:-0.78px;">ASI</i><i style="left:708px;letter-spacing:-0.33px;">Fits</i><i style="left:726px;letter-spacing:-0.2px;">View</i></span>
<span class="t" style="top:441.5px;color:#6d6d6d;"><i style="left:826.8px;letter-spacing:-0.62px;">22.852 </i><i style="left:862.8px;letter-spacing:-1px;">KB</i></span>
<span class="t" style="top:462.5px;"><i style="left:183.2px;letter-spacing:0.2px;">Light</i><i class="u" style="left:210.2px">_</i><i style="left:215.2px;letter-spacing:-0.89px;">NGC </i><i style="left:242.2px;letter-spacing:-0.67px;">1499</i><i class="u" style="left:266.2px">_</i><i style="left:271.2px;letter-spacing:-0.67px;">120.0s</i><i class="u" style="left:303.2px">_</i><i style="left:308.2px;letter-spacing:-0.25px;">Bin1</i><i class="u" style="left:331.2px">_</i><i style="left:336.2px;letter-spacing:-0.67px;">20251005</i><i style="left:384.6px;">-</i><i style="left:389.2px;letter-spacing:-0.67px;">004620</i><i class="u" style="left:425.2px">_</i><i style="left:430.2px;letter-spacing:-0.67px;">0066</i><i style="left:454.2px;letter-spacing:0.48px;">.fit</i></span>
<span class="t" style="top:462.5px;color:#6d6d6d;"><i style="left:546.6px;letter-spacing:-0.21px;">05/10/2025 </i><i style="left:607.6px;letter-spacing:-0.59px;">0:46</i></span>
<span class="t" style="top:462.5px;color:#6d6d6d;"><i style="left:691px;letter-spacing:-0.78px;">ASI</i><i style="left:708px;letter-spacing:-0.33px;">Fits</i><i style="left:726px;letter-spacing:-0.2px;">View</i></span>
<span class="t" style="top:462.5px;color:#6d6d6d;"><i style="left:826.8px;letter-spacing:-0.62px;">22.852 </i><i style="left:862.8px;letter-spacing:-1px;">KB</i></span>
<span class="t" style="top:483.5px;"><i style="left:183.2px;letter-spacing:0.2px;">Light</i><i class="u" style="left:210.2px">_</i><i style="left:215.2px;letter-spacing:-0.89px;">NGC </i><i style="left:242.2px;letter-spacing:-0.67px;">1499</i><i class="u" style="left:266.2px">_</i><i style="left:271.2px;letter-spacing:-0.67px;">120.0s</i><i class="u" style="left:303.2px">_</i><i style="left:308.2px;letter-spacing:-0.25px;">Bin1</i><i class="u" style="left:331.2px">_</i><i style="left:336.2px;letter-spacing:-0.67px;">20251005</i><i style="left:384.6px;">-</i><i style="left:389.2px;letter-spacing:-0.67px;">004821</i><i class="u" style="left:425.2px">_</i><i style="left:430.2px;letter-spacing:-0.67px;">0067</i><i style="left:454.2px;letter-spacing:0.48px;">.fit</i></span>
<span class="t" style="top:483.5px;color:#6d6d6d;"><i style="left:546.6px;letter-spacing:-0.21px;">05/10/2025 </i><i style="left:607.6px;letter-spacing:-0.59px;">0:48</i></span>
<span class="t" style="top:483.5px;color:#6d6d6d;"><i style="left:691px;letter-spacing:-0.78px;">ASI</i><i style="left:708px;letter-spacing:-0.33px;">Fits</i><i style="left:726px;letter-spacing:-0.2px;">View</i></span>
<span class="t" style="top:483.5px;color:#6d6d6d;"><i style="left:826.8px;letter-spacing:-0.62px;">22.852 </i><i style="left:862.8px;letter-spacing:-1px;">KB</i></span>
<span class="t" style="top:504.5px;"><i style="left:183.2px;letter-spacing:0.2px;">Light</i><i class="u" style="left:210.2px">_</i><i style="left:215.2px;letter-spacing:-0.89px;">NGC </i><i style="left:242.2px;letter-spacing:-0.67px;">1499</i><i class="u" style="left:266.2px">_</i><i style="left:271.2px;letter-spacing:-0.67px;">120.0s</i><i class="u" style="left:303.2px">_</i><i style="left:308.2px;letter-spacing:-0.25px;">Bin1</i><i class="u" style="left:331.2px">_</i><i style="left:336.2px;letter-spacing:-0.67px;">20251005</i><i style="left:384.6px;">-</i><i style="left:389.2px;letter-spacing:-0.67px;">005022</i><i class="u" style="left:425.2px">_</i><i style="left:430.2px;letter-spacing:-0.67px;">0068</i><i style="left:454.2px;letter-spacing:0.48px;">.fit</i></span>
<span class="t" style="top:504.5px;color:#6d6d6d;"><i style="left:546.6px;letter-spacing:-0.21px;">05/10/2025 </i><i style="left:607.6px;letter-spacing:-0.59px;">0:50</i></span>
<span class="t" style="top:504.5px;color:#6d6d6d;"><i style="left:691px;letter-spacing:-0.78px;">ASI</i><i style="left:708px;letter-spacing:-0.33px;">Fits</i><i style="left:726px;letter-spacing:-0.2px;">View</i></span>
<span class="t" style="top:504.5px;color:#6d6d6d;"><i style="left:826.8px;letter-spacing:-0.62px;">22.852 </i><i style="left:862.8px;letter-spacing:-1px;">KB</i></span>
<span class="t" style="top:525.5px;"><i style="left:183.2px;letter-spacing:0.2px;">Light</i><i class="u" style="left:210.2px">_</i><i style="left:215.2px;letter-spacing:-0.89px;">NGC </i><i style="left:242.2px;letter-spacing:-0.67px;">1499</i><i class="u" style="left:266.2px">_</i><i style="left:271.2px;letter-spacing:-0.67px;">120.0s</i><i class="u" style="left:303.2px">_</i><i style="left:308.2px;letter-spacing:-0.25px;">Bin1</i><i class="u" style="left:331.2px">_</i><i style="left:336.2px;letter-spacing:-0.67px;">20251005</i><i style="left:384.6px;">-</i><i style="left:389.2px;letter-spacing:-0.67px;">005223</i><i class="u" style="left:425.2px">_</i><i style="left:430.2px;letter-spacing:-0.67px;">0069</i><i style="left:454.2px;letter-spacing:0.48px;">.fit</i></span>
<span class="t" style="top:525.5px;color:#6d6d6d;"><i style="left:546.6px;letter-spacing:-0.21px;">05/10/2025 </i><i style="left:607.6px;letter-spacing:-0.59px;">0:52</i></span>
<span class="t" style="top:525.5px;color:#6d6d6d;"><i style="left:691px;letter-spacing:-0.78px;">ASI</i><i style="left:708px;letter-spacing:-0.33px;">Fits</i><i style="left:726px;letter-spacing:-0.2px;">View</i></span>
<span class="t" style="top:525.5px;color:#6d6d6d;"><i style="left:826.8px;letter-spacing:-0.62px;">22.852 </i><i style="left:862.8px;letter-spacing:-1px;">KB</i></span>
<span class="t" style="top:546.5px;"><i style="left:183.2px;letter-spacing:0.2px;">Light</i><i class="u" style="left:210.2px">_</i><i style="left:215.2px;letter-spacing:-0.89px;">NGC </i><i style="left:242.2px;letter-spacing:-0.67px;">1499</i><i class="u" style="left:266.2px">_</i><i style="left:271.2px;letter-spacing:-0.67px;">120.0s</i><i class="u" style="left:303.2px">_</i><i style="left:308.2px;letter-spacing:-0.25px;">Bin1</i><i class="u" style="left:331.2px">_</i><i style="left:336.2px;letter-spacing:-0.67px;">20251005</i><i style="left:384.6px;">-</i><i style="left:389.2px;letter-spacing:-0.67px;">005424</i><i class="u" style="left:425.2px">_</i><i style="left:430.2px;letter-spacing:-0.67px;">0070</i><i style="left:454.2px;letter-spacing:0.48px;">.fit</i></span>
<span class="t" style="top:546.5px;color:#6d6d6d;"><i style="left:546.6px;letter-spacing:-0.21px;">05/10/2025 </i><i style="left:607.6px;letter-spacing:-0.59px;">0:54</i></span>
<span class="t" style="top:546.5px;color:#6d6d6d;"><i style="left:691px;letter-spacing:-0.78px;">ASI</i><i style="left:708px;letter-spacing:-0.33px;">Fits</i><i style="left:726px;letter-spacing:-0.2px;">View</i></span>
<span class="t" style="top:546.5px;color:#6d6d6d;"><i style="left:826.8px;letter-spacing:-0.62px;">22.852 </i><i style="left:862.8px;letter-spacing:-1px;">KB</i></span>
<span class="t" style="top:567.5px;"><i style="left:183.2px;letter-spacing:0.2px;">Light</i><i class="u" style="left:210.2px">_</i><i style="left:215.2px;letter-spacing:-0.89px;">NGC </i><i style="left:242.2px;letter-spacing:-0.67px;">1499</i><i class="u" style="left:266.2px">_</i><i style="left:271.2px;letter-spacing:-0.67px;">120.0s</i><i class="u" style="left:303.2px">_</i><i style="left:308.2px;letter-spacing:-0.25px;">Bin1</i><i class="u" style="left:331.2px">_</i><i style="left:336.2px;letter-spacing:-0.67px;">20251005</i><i style="left:384.6px;">-</i><i style="left:389.2px;letter-spacing:-0.67px;">005624</i><i class="u" style="left:425.2px">_</i><i style="left:430.2px;letter-spacing:-0.67px;">0071</i><i style="left:454.2px;letter-spacing:0.48px;">.fit</i></span>
<span class="t" style="top:567.5px;color:#6d6d6d;"><i style="left:546.6px;letter-spacing:-0.21px;">05/10/2025 </i><i style="left:607.6px;letter-spacing:-0.59px;">0:56</i></span>
<span class="t" style="top:567.5px;color:#6d6d6d;"><i style="left:691px;letter-spacing:-0.78px;">ASI</i><i style="left:708px;letter-spacing:-0.33px;">Fits</i><i style="left:726px;letter-spacing:-0.2px;">View</i></span>
<span class="t" style="top:567.5px;color:#6d6d6d;"><i style="left:826.8px;letter-spacing:-0.62px;">22.852 </i><i style="left:862.8px;letter-spacing:-1px;">KB</i></span>
<span class="t" style="top:588.5px;"><i style="left:183.2px;letter-spacing:0.2px;">Light</i><i class="u" style="left:210.2px">_</i><i style="left:215.2px;letter-spacing:-0.89px;">NGC </i><i style="left:242.2px;letter-spacing:-0.67px;">1499</i><i class="u" style="left:266.2px">_</i><i style="left:271.2px;letter-spacing:-0.67px;">120.0s</i><i class="u" style="left:303.2px">_</i><i style="left:308.2px;letter-spacing:-0.25px;">Bin1</i><i class="u" style="left:331.2px">_</i><i style="left:336.2px;letter-spacing:-0.67px;">20251005</i><i style="left:384.6px;">-</i><i style="left:389.2px;letter-spacing:-0.67px;">005825</i><i class="u" style="left:425.2px">_</i><i style="left:430.2px;letter-spacing:-0.67px;">0072</i><i style="left:454.2px;letter-spacing:0.48px;">.fit</i></span>
<span class="t" style="top:588.5px;color:#6d6d6d;"><i style="left:546.6px;letter-spacing:-0.21px;">05/10/2025 </i><i style="left:607.6px;letter-spacing:-0.59px;">0:58</i></span>
<span class="t" style="top:588.5px;color:#6d6d6d;"><i style="left:691px;letter-spacing:-0.78px;">ASI</i><i style="left:708px;letter-spacing:-0.33px;">Fits</i><i style="left:726px;letter-spacing:-0.2px;">View</i></span>
<span class="t" style="top:588.5px;color:#6d6d6d;"><i style="left:826.8px;letter-spacing:-0.62px;">22.852 </i><i style="left:862.8px;letter-spacing:-1px;">KB</i></span>
<span class="t" style="top:609.5px;"><i style="left:183.2px;letter-spacing:0.2px;">Light</i><i class="u" style="left:210.2px">_</i><i style="left:215.2px;letter-spacing:-0.89px;">NGC </i><i style="left:242.2px;letter-spacing:-0.67px;">1499</i><i class="u" style="left:266.2px">_</i><i style="left:271.2px;letter-spacing:-0.67px;">120.0s</i><i class="u" style="left:303.2px">_</i><i style="left:308.2px;letter-spacing:-0.25px;">Bin1</i><i class="u" style="left:331.2px">_</i><i style="left:336.2px;letter-spacing:-0.67px;">20251005</i><i style="left:384.6px;">-</i><i style="left:389.2px;letter-spacing:-0.67px;">010026</i><i class="u" style="left:425.2px">_</i><i style="left:430.2px;letter-spacing:-0.67px;">0073</i><i style="left:454.2px;letter-spacing:0.48px;">.fit</i></span>
<span class="t" style="top:609.5px;color:#6d6d6d;"><i style="left:546.6px;letter-spacing:-0.21px;">05/10/2025 </i><i style="left:607.6px;letter-spacing:-0.59px;">1:00</i></span>
<span class="t" style="top:609.5px;color:#6d6d6d;"><i style="left:691px;letter-spacing:-0.78px;">ASI</i><i style="left:708px;letter-spacing:-0.33px;">Fits</i><i style="left:726px;letter-spacing:-0.2px;">View</i></span>
<span class="t" style="top:609.5px;color:#6d6d6d;"><i style="left:826.8px;letter-spacing:-0.62px;">22.852 </i><i style="left:862.8px;letter-spacing:-1px;">KB</i></span>
<span class="t" style="top:630.5px;"><i style="left:183.2px;letter-spacing:0.2px;">Light</i><i class="u" style="left:210.2px">_</i><i style="left:215.2px;letter-spacing:-0.89px;">NGC </i><i style="left:242.2px;letter-spacing:-0.67px;">1499</i><i class="u" style="left:266.2px">_</i><i style="left:271.2px;letter-spacing:-0.67px;">120.0s</i><i class="u" style="left:303.2px">_</i><i style="left:308.2px;letter-spacing:-0.25px;">Bin1</i><i class="u" style="left:331.2px">_</i><i style="left:336.2px;letter-spacing:-0.67px;">20251005</i><i style="left:384.6px;">-</i><i style="left:389.2px;letter-spacing:-0.67px;">010227</i><i class="u" style="left:425.2px">_</i><i style="left:430.2px;letter-spacing:-0.67px;">0074</i><i style="left:454.2px;letter-spacing:0.48px;">.fit</i></span>
<span class="t" style="top:630.5px;color:#6d6d6d;"><i style="left:546.6px;letter-spacing:-0.21px;">05/10/2025 </i><i style="left:607.6px;letter-spacing:-0.59px;">1:02</i></span>
<span class="t" style="top:630.5px;color:#6d6d6d;"><i style="left:691px;letter-spacing:-0.78px;">ASI</i><i style="left:708px;letter-spacing:-0.33px;">Fits</i><i style="left:726px;letter-spacing:-0.2px;">View</i></span>
<span class="t" style="top:630.5px;color:#6d6d6d;"><i style="left:826.8px;letter-spacing:-0.62px;">22.852 </i><i style="left:862.8px;letter-spacing:-1px;">KB</i></span>
<span class="t" style="top:648px;color:#1a1a1a;z-index:6;"><i style="left:15.4px;letter-spacing:-0.51px;">159 </i><i style="left:36.96px;letter-spacing:0.01px;">elementos</i></span>
<span class="t" style="top:648px;color:#1a1a1a;z-index:6;"><i style="left:112.4px;letter-spacing:-0.63px;">1 </i><i style="left:121.47px;">elemento </i><i style="left:173.87px;letter-spacing:-0.04px;">seleccionado</i></span>
<span class="t" style="top:648px;color:#1a1a1a;z-index:6;"><i style="left:249.4px;letter-spacing:-0.65px;">22,3 </i><i style="left:273.11px;letter-spacing:-0.11px;">MB</i></span>
<div class="b" style="left:0;top:643px;width:944px;height:24px;background:#fff;z-index:5"></div>
<svg class="b" style="left:0;top:0;z-index:7" width="994" height="667" viewBox="0 0 994 667"><rect x="11.5" y="7.5" width="11" height="15" fill="#ffe392" stroke="#f0c64e"/><rect x="13" y="8.5" width="1" height="13" fill="#ffecb0"/><rect x="21.5" y="16.6" width="2" height="5.9" fill="#ffe392" stroke="#f0c64e"/>
<rect x="32" y="9" width="1" height="12" fill="#9a9a9a"/>
<path d="M44.5 8.5h8l3 3v12h-11z" fill="#f7f7f7" stroke="#8c8c8c" stroke-width="1"/><path d="M52.5 8.5v3h3" fill="none" stroke="#8c8c8c" stroke-width="1"/>
<path d="M46.5 15.5l2.6 2.6l4.6-5" fill="none" stroke="#f2601c" stroke-width="1.5"/>
<rect x="66.5" y="8.5" width="11" height="15" fill="#ffe392" stroke="#f0c64e"/><rect x="68" y="9.5" width="1" height="13" fill="#ffecb0"/><rect x="76.5" y="17.6" width="2" height="5.9" fill="#ffe392" stroke="#f0c64e"/>
<rect x="87" y="14" width="7" height="1" fill="#1a1a1a"/><path d="M87.5 17h6l-3.0 3z" fill="#1a1a1a"/>
<rect x="102" y="9" width="1" height="12" fill="#9a9a9a"/>
<rect x="874" y="15" width="10" height="1" fill="#000"/>
<rect x="919.5" y="10.5" width="9" height="9" fill="none" stroke="#000"/>
<path d="M965 10l10 10M975 10l-10 10" stroke="#000" stroke-width="1.1" fill="none"/>
<path d="M956.5 44l4-4l4 4" fill="none" stroke="#9a9a9a" stroke-width="1.2"/>
<circle cx="982" cy="42" r="7.800" fill="#0f62b4"/><text x="982" y="46.500" font-size="12" font-weight="bold" fill="#fff" text-anchor="middle" font-family="Liberation Sans, sans-serif">?</text>
<path d="M36.5 76.3L39.5 75.5L45 73.2L46 70L48.5 67.8L55.2 74.2L53 76.6L49.8 77.6L47.8 83L47.3 86z" fill="#adbad0"/><path d="M42 81.2L35.3 87.6" stroke="#adbad0" stroke-width="2.2" stroke-linecap="round"/>
<path d="M93.5 64.5h11l4 4v15h-15z" fill="#fff" stroke="#8f8f8f" stroke-width="1"/><path d="M104.5 64.5v4h4" fill="none" stroke="#8f8f8f" stroke-width="1"/><rect x="95" y="67" width="9" height="1" fill="#a9c9f7"/><rect x="95" y="69" width="9" height="1" fill="#a9c9f7"/><rect x="95" y="71" width="9" height="1" fill="#a9c9f7"/><rect x="95" y="73" width="9" height="1" fill="#a9c9f7"/><rect x="95" y="75" width="9" height="1" fill="#a9c9f7"/><rect x="95" y="77" width="9" height="1" fill="#a9c9f7"/><rect x="95" y="79" width="9" height="1" fill="#a9c9f7"/><rect x="95" y="81" width="9" height="1" fill="#a9c9f7"/>
<path d="M101.5 72.5h11l4 4v15h-15z" fill="#fff" stroke="#8f8f8f" stroke-width="1"/><path d="M112.5 72.5v4h4" fill="none" stroke="#8f8f8f" stroke-width="1"/><rect x="103" y="76" width="12" height="1" fill="#3f86e6"/><rect x="103" y="78" width="12" height="1" fill="#3f86e6"/><rect x="103" y="80" width="12" height="1" fill="#3f86e6"/><rect x="103" y="82" width="12" height="1" fill="#3f86e6"/><rect x="103" y="84" width="12" height="1" fill="#3f86e6"/><rect x="103" y="86" width="12" height="1" fill="#3f86e6"/><rect x="103" y="88" width="12" height="1" fill="#3f86e6"/>
<rect x="137" y="65.5" width="20" height="26.5" rx="1.5" fill="#6d4319"/><rect x="139" y="68" width="16" height="22" fill="#fdfdfd"/><rect x="139" y="71.0" width="16" height="1" fill="#b9d9f1"/><rect x="139" y="74.2" width="16" height="1" fill="#b9d9f1"/><rect x="139" y="77.4" width="16" height="1" fill="#b9d9f1"/><rect x="139" y="80.6" width="16" height="1" fill="#b9d9f1"/><rect x="139" y="83.8" width="16" height="1" fill="#b9d9f1"/><rect x="139" y="87.0" width="16" height="1" fill="#b9d9f1"/><path d="M141.5 68.5l1.5-3h8l1.5 3z" fill="#b5b5b5" stroke="#8a8a8a" stroke-width=".6"/><rect x="145.3" y="63" width="3.4" height="3" rx="1.2" fill="none" stroke="#9a9a9a"/>
<path d="M174.800 62l6 10.800M183.800 62l-6 10.800" stroke="#9ba7b3" stroke-width="1.800" fill="none"/><ellipse cx="176.300" cy="74.500" rx="2.900" ry="2" fill="none" stroke="#1a7fd0" stroke-width="1.500" transform="rotate(-52 176.300 74.500)"/><ellipse cx="182.300" cy="74.500" rx="2.900" ry="2" fill="none" stroke="#1a7fd0" stroke-width="1.500" transform="rotate(52 182.300 74.500)"/>
<rect x="171.500" y="88.500" width="14" height="8" fill="#b9dcfa" stroke="#9ccbf2"/><path d="M173.300 90l1.900 4.700M175.800 90l1.900 4.700" stroke="#1a1a1a" stroke-width="1.300"/><rect x="178.800" y="93.300" width="1.300" height="1.300" fill="#1a1a1a"/><rect x="181" y="93.300" width="1.300" height="1.300" fill="#1a1a1a"/><rect x="183.200" y="93.300" width="1.300" height="1.300" fill="#1a1a1a"/>
<rect x="172" y="107" width="13" height="15" rx="1.300" fill="#6a3c1a"/><rect x="174" y="109.500" width="9" height="10.500" fill="#fff"/><rect x="175.300" y="105.800" width="6.400" height="2.600" rx=".6" fill="#b8b8b8" stroke="#8a8a8a" stroke-width=".5"/><path d="M177.300 111.200h4.900v4.900l-1.700-1.700c-1.500 1-2.200 2.200-2.400 3.800h-2.200c.1-2.400 1.200-4.200 3.100-5.300z" fill="#2a5ca8"/>
<rect x="326.5" y="64.5" width="20" height="27" fill="#ffe392" stroke="#f0c64e"/><rect x="328" y="65.5" width="1" height="25" fill="#ffecb0"/><rect x="346.5" y="80.500" width="2.5" height="11" fill="#ffe392" stroke="#f0c64e"/>
<path d="M336.300 85l8-8v4.500h7.800v7h-7.800v4.500z" fill="#2b8ae2"/>
<rect x="368.5" y="64.5" width="22" height="27" fill="#ffe392" stroke="#f0c64e"/><rect x="370" y="65.5" width="1" height="25" fill="#ffecb0"/><rect x="386.5" y="81.500" width="4" height="10" fill="#ffe392" stroke="#f0c64e"/>
<path d="M377.5 62.5h8l3 3v12h-11z" fill="#fff" stroke="#8f8f8f" stroke-width="1"/><path d="M385.5 62.5v3h3" fill="none" stroke="#8f8f8f" stroke-width="1"/><rect x="379" y="65" width="6" height="1" fill="#a9c9f7"/><rect x="379" y="67" width="6" height="1" fill="#a9c9f7"/><rect x="379" y="69" width="6" height="1" fill="#a9c9f7"/><rect x="379" y="71" width="6" height="1" fill="#a9c9f7"/><rect x="379" y="73" width="6" height="1" fill="#a9c9f7"/><rect x="379" y="75" width="6" height="1" fill="#a9c9f7"/>
<path d="M382.5 65.5h8l3 3v12h-11z" fill="#fff" stroke="#8f8f8f" stroke-width="1"/><path d="M390.5 65.5v3h3" fill="none" stroke="#8f8f8f" stroke-width="1"/><rect x="384" y="69" width="8" height="1" fill="#3f86e6"/><rect x="384" y="71" width="8" height="1" fill="#3f86e6"/><rect x="384" y="73" width="8" height="1" fill="#3f86e6"/><rect x="384" y="75" width="8" height="1" fill="#3f86e6"/><rect x="384" y="77" width="8" height="1" fill="#3f86e6"/><rect x="384" y="79" width="8" height="1" fill="#3f86e6"/>
<path d="M420 66.800L442 89M442 66.800L420 89" stroke="#e20613" stroke-width="4.600" fill="none"/>
<rect x="463.500" y="72.500" width="27" height="11" fill="#fff" stroke="#8c8c8c"/><rect x="466" y="75" width="13" height="6" fill="#2f8fe8"/><path d="M480.300 65.800c3 0 4.700 1 4.700 3.500c0-2.500 1.700-3.500 4.700-3.500M480.300 90.200c3 0 4.700-1 4.700-3.500c0 2.500 1.700 3.500 4.700 3.500M485 69v18" fill="none" stroke="#5c5c5c" stroke-width="1.800"/>
<path d="M337.65 115.2h5.5l-2.75 3z" fill="#1a1a1a"/><path d="M379.75 115.2h5.5l-2.75 3z" fill="#1a1a1a"/><path d="M427.45 115.2h5.5l-2.75 3z" fill="#1a1a1a"/><path d="M715.75 115.2h5.5l-2.75 3z" fill="#1a1a1a"/>
<path d="M664.75 68.3h5.5l-2.75 3z" fill="#1a1a1a"/><path d="M640.75 90.3h5.5l-2.75 3z" fill="#1a1a1a"/><path d="M805.75 68.3h5.5l-2.75 3z" fill="#1a1a1a"/>
<defs><linearGradient id="nf" x1="0" y1="0" x2="1" y2="1"><stop offset="0" stop-color="#eec252"/><stop offset="1" stop-color="#fbdf88"/></linearGradient></defs><path d="M523.300 66H538.100V79.300L540 81.200V88H527V70z" fill="url(#nf)"/><path d="M522 66.600l5.200 3.600v22.700l-5.200-3.700z" fill="#fce9a6"/>
<rect x="558.600" y="62.900" width="9.800" height="6.300" fill="#a9d7f1" stroke="#3b8cba" stroke-width="1.200"/><rect x="561" y="65" width="1.500" height="3" fill="#5a9a4a"/><rect x="562.500" y="64.500" width="1.500" height="2" fill="#e09040"/><path d="M562.5 66.5h5l2 2v6h-7z" fill="#fff" stroke="#8f8f8f" stroke-width="1"/><path d="M567.5 66.5v2h2" fill="none" stroke="#8f8f8f" stroke-width="1"/><path d="M566.5 68.5h5l2 2v7h-7z" fill="#fff" stroke="#8a8a8a" stroke-width="1"/><path d="M571.5 68.5v2h2" fill="none" stroke="#8a8a8a" stroke-width="1"/><rect x="569.5" y="71" width="3.5" height="1" fill="#7fb0ee"/><rect x="569.5" y="73" width="3.5" height="1" fill="#7fb0ee"/><rect x="569.5" y="75" width="3.5" height="1" fill="#7fb0ee"/><rect x="568.200" y="69.500" width="1" height="7.500" fill="#f08a8a"/>
<path d="M561.5 84.5h8l3 3v12h-11z" fill="#fff" stroke="#7c7c7c" stroke-width="1"/><path d="M569.5 84.5v3h3" fill="none" stroke="#7c7c7c" stroke-width="1"/><rect x="560" y="86.900" width="5.200" height="1.100" fill="#1a5fb4"/><rect x="559" y="89" width="5.200" height="1.100" fill="#1a5fb4"/><rect x="558" y="91.100" width="5" height="1.100" fill="#1a5fb4"/>
<path d="M708.5 64.5h15l5 5v22h-20z" fill="#fcfcfc" stroke="#8c8c8c" stroke-width="1"/><path d="M723.5 64.5v5h5" fill="none" stroke="#8c8c8c" stroke-width="1"/>
<path d="M711 79.500l5.300 5.200l9.500-10" fill="none" stroke="#f2661c" stroke-width="2.400"/>
<path d="M757 65L763.500 64.500L768.500 62L771 63.300V64.800L773 65V76L772 77H759L758 72.500L757 72z" fill="#e8184a"/><text x="761" y="72.300" font-size="5.500" font-weight="bold" fill="#fff" font-family="Liberation Sans, sans-serif" textLength="10" lengthAdjust="spacingAndGlyphs">FITS</text>
<path d="M759.5 84.5h8l3 3v12h-11z" fill="#dfe6f2" stroke="#a9b7d0" stroke-width="1"/><path d="M767.5 84.5v3h3" fill="none" stroke="#a9b7d0" stroke-width="1"/><path d="M762 97.500l8.500-10" stroke="#b3bfd6" stroke-width="2.200"/>
<rect x="757.500" y="106.500" width="10" height="13" fill="#ffe392" stroke="#f0c64e"/><path d="M759.500 115.500h6c0-2.500 1.200-4 3-4.500l-.5-1.800c-3 .5-4.800 2.800-5 6.300z" fill="#3fae49"/><path d="M759 115l3.800 4l3.800-4z" fill="#3fae49"/><circle cx="768.200" cy="116.500" r="4.600" fill="#f4f4f4" stroke="#8a8a8a" stroke-width="1.200"/><path d="M768.200 113.500v3.200l2-1.600" fill="none" stroke="#555" stroke-width=".9"/>
<rect x="843.6" y="62.6" width="6.8" height="6.8" fill="#aed7fb" stroke="#3790ec" stroke-width="1.200"/><rect x="851.6" y="62.6" width="6.8" height="6.8" fill="#aed7fb" stroke="#3790ec" stroke-width="1.200"/><rect x="843.6" y="70.6" width="6.8" height="6.8" fill="#aed7fb" stroke="#3790ec" stroke-width="1.200"/><rect x="851.6" y="70.6" width="6.8" height="6.8" fill="#aed7fb" stroke="#3790ec" stroke-width="1.200"/>
<rect x="844.5" y="85.5" width="5" height="5" fill="#fff" stroke="#a3a3a3"/><rect x="852.5" y="85.5" width="5" height="5" fill="#fff" stroke="#a3a3a3"/><rect x="844.5" y="93.5" width="5" height="5" fill="#fff" stroke="#a3a3a3"/><rect x="852.5" y="93.5" width="5" height="5" fill="#fff" stroke="#a3a3a3"/>
<rect x="844.5" y="107.5" width="5" height="5" fill="#fff" stroke="#a3a3a3"/><rect x="851.6" y="106.6" width="6.8" height="6.8" fill="#aed7fb" stroke="#3790ec" stroke-width="1.200"/><rect x="843.6" y="114.6" width="6.8" height="6.8" fill="#aed7fb" stroke="#3790ec" stroke-width="1.200"/><rect x="852.5" y="115.5" width="5" height="5" fill="#fff" stroke="#a3a3a3"/>
<path d="M25.500 164h-11M19.500 158.800l-5.300 5.200l5.300 5.200" fill="none" stroke="#666" stroke-width="1.800"/>
<path d="M44.500 164h11M50.500 158.800l5.300 5.200l-5.300 5.200" fill="none" stroke="#d2d2d2" stroke-width="1.800"/>
<path d="M70.800 162.300l2.700 2.700l2.700-2.700" fill="none" stroke="#666" stroke-width="1.500"/>
<path d="M94 170v-11M88.700 164.200l5.300-5.300l5.300 5.300" fill="none" stroke="#666" stroke-width="1.800"/>
<rect x="112.5" y="155.5" width="11" height="15" fill="#ffe392" stroke="#f0c64e"/><rect x="114" y="156.5" width="1" height="13" fill="#ffecb0"/><rect x="122.5" y="164.6" width="2" height="5.9" fill="#ffe392" stroke="#f0c64e"/>
<path d="M133.800 161.700l2.600 2.600l-2.600 2.600" fill="none" stroke="#777" stroke-width="1.500"/>
<path d="M205.400 161.700l2.600 2.600l-2.600 2.600" fill="none" stroke="#777" stroke-width="1.500"/>
<path d="M805.800 162.800l4.200 4.200l4.200-4.200" fill="none" stroke="#6e6e6e" stroke-width="2"/>
<path d="M824.200 161.400A4.400 4.400 0 1 0 831.100 163.400" fill="none" stroke="#747474" stroke-width="1.700"/><path d="M823.400 159.600H827.800V163.800" fill="none" stroke="#747474" stroke-width="1.600"/>
<circle cx="968" cy="163" r="3.400" fill="none" stroke="#707070" stroke-width="1.800"/><path d="M965.700 165.600l-4.700 4.200" stroke="#707070" stroke-width="2"/>
<path d="M345.500 186.500l3.700-3.700l3.700 3.700" fill="none" stroke="#707070" stroke-width="1.100"/>
<path d="M981 193.500l3.800-3.800l3.800 3.800" fill="none" stroke="#505050" stroke-width="1.800"/>
<path d="M981 633l3.800 3.800l3.800-3.800" fill="none" stroke="#505050" stroke-width="1.800"/>
<path d="M36.9 204.0L37.6 208.4L41.9 209.5L37.9 211.5L38.2 216.0L35.0 212.8L30.9 214.4L32.9 210.5L30.1 207.0L34.5 207.7z" fill="#2788e4"/><path d="M27.200 208l3.200-.7M26.600 211l3.600-.5M28.300 214l3-.8" stroke="#4a9dea" stroke-width="1.100"/>
<path d="M28.300 246.800a3.300 3.300 0 0 1-.6-6.500a4.700 4.700 0 0 1 8.600-1.600a3.300 3.300 0 0 1 3.800 3.200a2.600 2.600 0 0 1-1.600 4.900z" fill="#2a9af0"/><path d="M27.700 240.300a4.700 4.700 0 0 1 8.600-1.600a3.300 3.300 0 0 1 2 .500l-6.500 3.800l-4.600-2.500z" fill="#0b5fc0"/>
<rect x="25.500" y="267.500" width="15" height="10" fill="#53bdf5" stroke="#3a9ad9"/><path d="M26 277l14.500-9.500v9.500z" fill="#2f9fe8" opacity=".6"/><rect x="31" y="278" width="4" height="2" fill="#9aa4ad"/><rect x="26" y="280.500" width="14.500" height="1.200" fill="#7d8a96"/>
<path d="M38 290h6v7.500h5l-8 8.500l-8-8.500h5z" fill="#2b8de0"/>
<path d="M35.5 314.5h8l3 3v12h-11z" fill="#fff" stroke="#8c8c8c" stroke-width="1"/><path d="M43.5 314.5v3h3" fill="none" stroke="#8c8c8c" stroke-width="1"/><rect x="37" y="320" width="8" height="1" fill="#7aa7d8"/><rect x="37" y="322" width="8" height="1" fill="#7aa7d8"/><rect x="37" y="324" width="8" height="1" fill="#7aa7d8"/><rect x="37" y="326" width="8" height="1" fill="#7aa7d8"/><rect x="37" y="317" width="4" height="2" fill="#3c78c8"/>
<rect x="33" y="340.500" width="16" height="11" fill="#1e90ea"/><rect x="33" y="349.500" width="16" height="2" fill="#1266b8"/><rect x="34.500" y="350" width="2" height="1" fill="#fff"/><rect x="45.500" y="350" width="1" height="1" fill="#fff"/><rect x="47" y="350" width="1" height="1" fill="#fff"/>
<rect x="33.500" y="364.500" width="15" height="11" fill="#fff" stroke="#9a9a9a"/><rect x="35" y="366" width="12" height="8" fill="#9fd0f2"/><path d="M35 374v-3.500l3.500-2l4 3l4.500-1v3.500z" fill="#4f8a5f"/>
<path d="M40.500 386v11.800" stroke="#2b8de0" stroke-width="1.800"/><ellipse cx="38.300" cy="398.500" rx="3" ry="2.500" fill="#2b8de0"/><path d="M40.500 386c.5 3 5 3.500 4.500 8.500c-.5-3-3-3.800-4.500-4z" fill="#2b8de0"/>
<path d="M41.300 416.200v8.800l-7.800-3.300v-8.700z" fill="#b4ecf4"/><path d="M41.300 416.200v8.800l7.900-3.300v-8.700z" fill="#179dc3"/><path d="M33.500 413l7.800-3l7.900 3l-7.900 3.200z" fill="#4fc9df"/>
<rect x="34" y="435" width="14" height="15" fill="#3c3c3c"/><rect x="36.500" y="436" width="9" height="6" fill="#3f86d8"/><rect x="36.500" y="443" width="9" height="6" fill="#3f86d8"/><rect x="37.500" y="438" width="3" height="4" fill="#e8b040"/><rect x="41.500" y="437.500" width="3" height="4.500" fill="#d86030"/><rect x="37.500" y="445" width="3" height="4" fill="#e8b040"/><rect x="41.500" y="445.500" width="3" height="3.500" fill="#c84040"/><rect x="34.7" y="436" width="1.1" height="1.5" fill="#e8e8e8"/><rect x="34.7" y="439" width="1.1" height="1.5" fill="#e8e8e8"/><rect x="34.7" y="442" width="1.1" height="1.5" fill="#e8e8e8"/><rect x="34.7" y="445" width="1.1" height="1.5" fill="#e8e8e8"/><rect x="34.7" y="448" width="1.1" height="1.5" fill="#e8e8e8"/><rect x="46.2" y="436" width="1.1" height="1.5" fill="#e8e8e8"/><rect x="46.2" y="439" width="1.1" height="1.5" fill="#e8e8e8"/><rect x="46.2" y="442" width="1.1" height="1.5" fill="#e8e8e8"/><rect x="46.2" y="445" width="1.1" height="1.5" fill="#e8e8e8"/><rect x="46.2" y="448" width="1.1" height="1.5" fill="#e8e8e8"/>
<rect x="34" y="466" width="14.500" height="6" rx="1" fill="#5a5f66"/><rect x="34" y="465" width="14.500" height="2.500" fill="#c9cdd2"/><rect x="45" y="469" width="1.500" height="1.500" fill="#5fe05f"/><rect x="33" y="460.500" width="2.200" height="2.200" fill="#1e9af0"/><rect x="35.800" y="460.500" width="2.200" height="2.200" fill="#1e9af0"/><rect x="33" y="463.200" width="2.200" height="1.800" fill="#1e9af0"/><rect x="35.800" y="463.200" width="2.200" height="1.800" fill="#1e9af0"/>
<rect x="34" y="487" width="13" height="4" fill="#c4c8cc"/><rect x="34" y="491" width="13" height="4.500" rx="1" fill="#6a6f76"/><rect x="36" y="495.500" width="9" height="1.500" fill="#9aa0a6"/><path d="M41.500 490.500l7 7M48.500 490.500l-7 7" stroke="#e0101a" stroke-width="2.200"/>
<defs><radialGradient id="gl" cx=".35" cy=".3" r=".8"><stop offset="0" stop-color="#cfeaf8"/><stop offset=".5" stop-color="#5fa8d0"/><stop offset="1" stop-color="#2a6f98"/></radialGradient></defs><circle cx="35.400" cy="519.500" r="5.700" fill="url(#gl)"/><path d="M32.500 515.500c1.500-.8 3-.5 3.500.5s-1.500 1.500-1 3s2 1 2.500 2.500" fill="none" stroke="#e6f4fb" stroke-width="1"/><rect x="25.600" y="520.500" width="11" height="7" fill="#55bdf6" stroke="#2a7fc0" stroke-width="1.100"/><path d="M26.200 527l10-6v6z" fill="#3ea8ee" opacity=".55"/><rect x="30" y="528" width="2.400" height="1" fill="#8a949c"/><rect x="28" y="528.900" width="6.400" height="1" fill="#7a96b0"/>
<rect x="949.500" y="648.500" width="4" height="12" fill="#fff" stroke="#8a8a8a"/><rect x="949.500" y="652.300" width="4" height=".8" fill="#8a8a8a"/><rect x="949.500" y="656.400" width="4" height=".8" fill="#8a8a8a"/><rect x="951" y="650" width="1" height="1" fill="#3a7a4a"/><rect x="951" y="654" width="1" height="1" fill="#3a8ae0"/><rect x="951" y="658" width="1" height="1" fill="#e02020"/><rect x="955" y="650" width="4" height="1.200" fill="#6a6a6a"/><rect x="961" y="650" width="4" height="1.200" fill="#6a6a6a"/><rect x="955" y="654" width="4" height="1.200" fill="#6a6a6a"/><rect x="961" y="654" width="4" height="1.200" fill="#6a6a6a"/><rect x="955" y="658" width="4" height="1.200" fill="#6a6a6a"/><rect x="961" y="658" width="4" height="1.200" fill="#6a6a6a"/>
<rect x="971.500" y="648.500" width="13" height="10" fill="#fff" stroke="#9a9a9a" stroke-width="1.200"/><rect x="973.300" y="650.300" width="9.400" height="6.400" fill="#4a90d0"/><path d="M973.300 656.700v-3.500l3-2l3 2.500l3.400-.5v3.500z" fill="#3f7a5a"/><rect x="976" y="650.300" width="6.700" height="1.500" fill="#9fd0f5"/></svg>
</body></html>
